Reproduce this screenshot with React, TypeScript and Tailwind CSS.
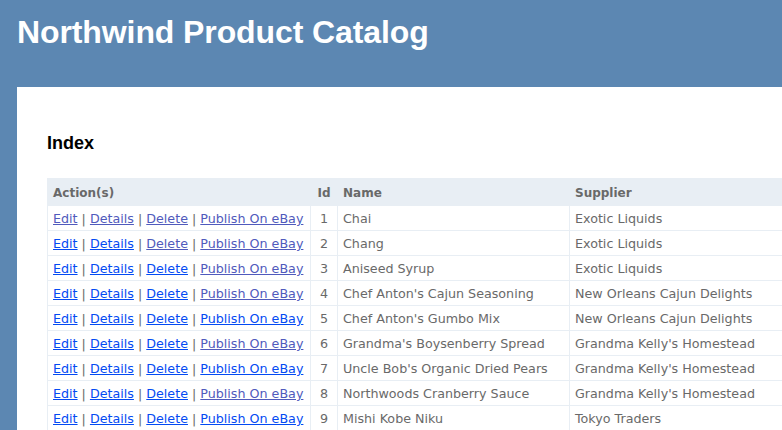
const products = [
  { id: 1, name: "Chai", supplier: "Exotic Liquids", v: [1, 1, 1, 1] },
  { id: 2, name: "Chang", supplier: "Exotic Liquids", v: [0, 0, 1, 1] },
  { id: 3, name: "Aniseed Syrup", supplier: "Exotic Liquids", v: [0, 0, 0, 1] },
  { id: 4, name: "Chef Anton's Cajun Seasoning", supplier: "New Orleans Cajun Delights", v: [0, 0, 0, 1] },
  { id: 5, name: "Chef Anton's Gumbo Mix", supplier: "New Orleans Cajun Delights", v: [0, 0, 0, 0] },
  { id: 6, name: "Grandma's Boysenberry Spread", supplier: "Grandma Kelly's Homestead", v: [0, 0, 0, 1] },
  { id: 7, name: "Uncle Bob's Organic Dried Pears", supplier: "Grandma Kelly's Homestead", v: [0, 0, 0, 0] },
  { id: 8, name: "Northwoods Cranberry Sauce", supplier: "Grandma Kelly's Homestead", v: [0, 0, 0, 1] },
  { id: 9, name: "Mishi Kobe Niku", supplier: "Tokyo Traders", v: [0, 0, 0, 0] },
];

const actions = ["Edit", "Details", "Delete", "Publish On eBay"];

const App = () => {
  return (
    <div className="h-[430px] w-[782px] overflow-hidden bg-[#5c87b2] font-['DejaVu_Sans',Verdana,sans-serif] text-[12px] text-[#696969]">
      {/* header */}
      <div className="h-[87px] pl-[17px] pt-[16px]">
        <h1 className="whitespace-nowrap font-['Liberation_Sans',Arial,sans-serif] text-[32px] font-bold leading-[32px] tracking-[-0.1px] text-white">
          Northwind Product Catalog
        </h1>
      </div>
      {/* main panel */}
      <div className="ml-[17px] h-[400px] w-[1000px] bg-white pl-[30px] pt-[47px]">
        <h2 className="font-['Liberation_Sans',Arial,sans-serif] text-[18px] font-bold leading-[18px] text-black">
          Index
        </h2>
        <table className="mt-[26px] table-fixed border-collapse leading-[14px]">
          <colgroup>
            <col className="w-[263px]" />
            <col className="w-[27px]" />
            <col className="w-[232px]" />
            <col className="w-[260px]" />
          </colgroup>
          <thead>
            <tr className="bg-[#e8eef4]">
              <th className="border border-[#e8eef4] px-[5px] pb-[5px] pt-[7px] text-left font-bold">Action(s)</th>
              <th className="border border-[#e8eef4] px-[3px] pb-[5px] pt-[7px] text-center font-bold">Id</th>
              <th className="border border-[#e8eef4] px-[5px] pb-[5px] pt-[7px] text-left font-bold">Name</th>
              <th className="border border-[#e8eef4] px-[5px] pb-[5px] pt-[7px] text-left font-bold">Supplier</th>
            </tr>
          </thead>
          <tbody className="text-[12.7px]">
            {products.map((p) => (
              <tr key={p.id}>
                <td className="whitespace-nowrap border border-[#e8eef4] px-[5px] pb-[4px] pt-[6px]">
                  {actions.map((a, i) => (
                    <span key={a}>
                      {i > 0 && " | "}
                      <a
                        href="#"
                        className={
                          p.v[i] ? "text-[#505abc] underline" : "text-[#034af3] underline"
                        }
                      >
                        {a}
                      </a>
                    </span>
                  ))}
                </td>
                <td className="border border-[#e8eef4] px-[3px] pb-[4px] pt-[6px] text-center">{p.id}</td>
                <td className="whitespace-nowrap border border-[#e8eef4] px-[5px] pb-[4px] pt-[6px]">{p.name}</td>
                <td className="whitespace-nowrap border border-[#e8eef4] px-[5px] pb-[4px] pt-[6px]">{p.supplier}</td>
              </tr>
            ))}
          </tbody>
        </table>
      </div>
    </div>
  );
};

export default App;
